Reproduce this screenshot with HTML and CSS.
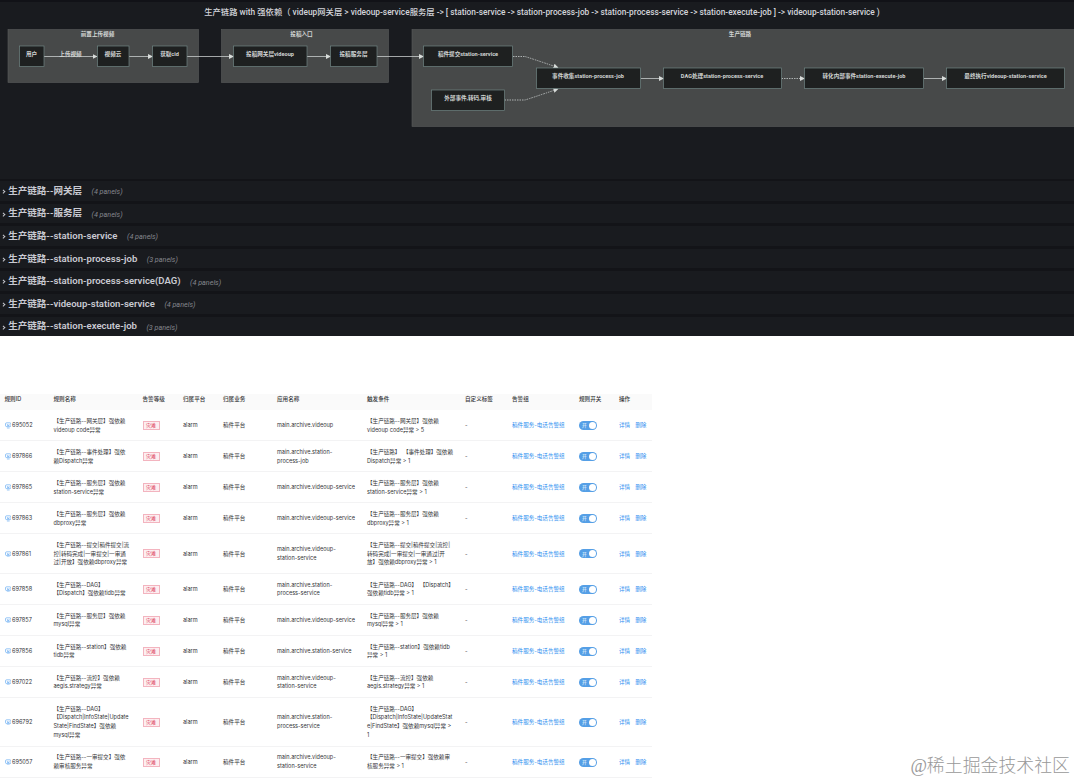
FILE: index.html
```html
<!DOCTYPE html>
<html lang="zh-CN">
<head>
  <meta charset="UTF-8" />
  <meta name="viewport" content="width=device-width, initial-scale=1.0" />
  <title>生产链路</title>
  <link rel="stylesheet" href="styles.css">
</head>
<body>
  <section class="dashboard">
    <div class="panel">
      <h1 class="panel-title">生产链路 with 强依赖（ videup网关层 &gt; videoup-service服务层 -&gt; [ station-service -&gt; station-process-job -&gt; station-process-service -&gt; station-execute-job ] -&gt; videoup-station-service )</h1>
      <svg class="diagram" width="1074" height="106" viewBox="0 24 1074 106">
        <defs>
          <marker id="arrow" viewBox="0 0 10 10" refX="9" refY="5" markerWidth="5" markerHeight="5" markerUnits="userSpaceOnUse" orient="auto">
            <path d="M0 0 L10 5 L0 10 z" fill="#d8dcda" />
          </marker>
        </defs>

        <g class="cluster">
          <rect x="8" y="29.5" width="190.5" height="53" />
          <rect x="221.5" y="29.5" width="167" height="53" />
          <rect x="412" y="29.5" width="664" height="97" />
          <text x="97.5" y="35.7">前置上传视频</text>
          <text x="301.5" y="35.7">投稿入口</text>
          <text x="740" y="35.7">生产链路</text>
        </g>

        <g class="edge">
          <path d="M44 56.5 H97" />
          <path d="M129 56.5 H152.5" />
          <path d="M187 56.5 H233.5" />
          <path d="M307 56.5 H330.5" />
          <path d="M377 56.5 H423.5" />
          <path d="M640.5 78.5 H663.5" />
          <path d="M924 78.5 H946.5" />
          <path class="dotted" d="M513 56.5 H525 Q530 58 558 67.5" />
          <path class="dotted" d="M504.5 100 H525 Q530 98.5 558 89" />
          <path class="dotted" d="M781.5 78.5 H804.5" />
        </g>
        <text class="edge-label" x="70.5" y="55.7">上传视频</text>

        <g class="node">
          <rect x="19.5" y="46" width="24.5" height="20.5" />
          <rect x="97.5" y="46" width="31.5" height="20.5" />
          <rect x="152.5" y="46" width="34.5" height="20.5" />
          <rect x="233.5" y="46" width="73.5" height="20.5" />
          <rect x="330.5" y="46" width="46.5" height="20.5" />
          <rect x="423.5" y="46" width="89" height="20.5" />
          <rect x="431.5" y="90" width="73" height="20.5" />
          <rect x="536.5" y="68" width="104" height="20.5" />
          <rect x="663.5" y="68" width="118" height="20.5" />
          <rect x="804.5" y="68" width="119" height="20.5" />
          <rect x="946.5" y="68" width="118" height="20.5" />
          <text x="31.5" y="56">用户</text>
          <text x="113" y="56">视频云</text>
          <text x="169.5" y="56">获取cid</text>
          <text x="270" y="56">投稿网关层videoup</text>
          <text x="353.5" y="56">投稿服务层</text>
          <text x="468" y="56">稿件提交station-service</text>
          <text x="468" y="100">外部事件,转码,审核</text>
          <text x="588" y="78">事件收集station-process-job</text>
          <text x="722" y="78">DAG处理station-process-service</text>
          <text x="864" y="78">转化内部事件station-execute-job</text>
          <text x="1005.5" y="78">最终执行videoup-station-service</text>
        </g>
      </svg>
    </div>

    <ul class="rows">
      <li><i class="chevron"></i><b>生产链路--网关层</b><em>(4 panels)</em></li>
      <li><i class="chevron"></i><b>生产链路--服务层</b><em>(4 panels)</em></li>
      <li><i class="chevron"></i><b>生产链路--station-service</b><em>(4 panels)</em></li>
      <li><i class="chevron"></i><b>生产链路--station-process-job</b><em>(3 panels)</em></li>
      <li><i class="chevron"></i><b>生产链路--station-process-service(DAG)</b><em>(4 panels)</em></li>
      <li><i class="chevron"></i><b>生产链路--videoup-station-service</b><em>(4 panels)</em></li>
      <li><i class="chevron"></i><b>生产链路--station-execute-job</b><em>(3 panels)</em></li>
    </ul>
  </section>

  <table class="rules">
    <colgroup>
      <col class="c-id"><col class="c-name"><col class="c-level"><col class="c-platform"><col class="c-biz"><col class="c-app">
      <col class="c-cond"><col class="c-tag"><col class="c-group"><col class="c-switch"><col class="c-action">
    </colgroup>
    <thead>
      <tr>
        <th>规则ID</th><th>规则名称</th><th>告警等级</th><th>归属平台</th><th>归属业务</th><th>应用名称</th>
        <th>触发条件</th><th>自定义标签</th><th>告警组</th><th>规则开关</th><th>操作</th>
      </tr>
    </thead>
    <tbody id="rules-body"></tbody>
  </table>

  <div class="watermark">@稀土掘金技术社区</div>

  <script>
    const rules = [
      { id: "695052", name: "【生产链路--网关层】强依赖<br>videoup code异常", app: "main.archive.videoup", cond: "【生产链路--网关层】强依赖<br>videoup code异常 &gt; 5" },
      { id: "697866", name: "【生产链路--事件处理】强依<br>赖Dispatch异常", app: "main.archive.station-<br>process-job", cond: "【生产链路】<span class=\"gap\"></span>【事件处理】强依赖<br>Dispatch异常 &gt; 1" },
      { id: "697865", name: "【生产链路--服务层】强依赖<br>station-service异常", app: "main.archive.videoup-service", cond: "【生产链路--服务层】强依赖<br>station-service异常 &gt; 1" },
      { id: "697863", name: "【生产链路--服务层】强依赖<br>dbproxy异常", app: "main.archive.videoup-service", cond: "【生产链路--服务层】强依赖<br>dbproxy异常 &gt; 1" },
      { id: "697861", name: "【生产链路--提交|稿件提交|流<br>控|转码完成|一审提交|一审通<br>过|开放】强依赖dbproxy异常", app: "main.archive.videoup-<br>station-service", cond: "【生产链路--提交|稿件提交|流控|<br>转码完成|一审提交|一审通过|开<br>放】强依赖dbproxy异常 &gt; 1" },
      { id: "697858", name: "【生产链路--DAG】<br>【Dispatch】强依赖tidb异常", app: "main.archive.station-<br>process-service", cond: "【生产链路--DAG】<span class=\"gap\"></span>【Dispatch】<br>强依赖tidb异常 &gt; 1" },
      { id: "697857", name: "【生产链路--服务层】强依赖<br>mysql异常", app: "main.archive.videoup-service", cond: "【生产链路--服务层】强依赖<br>mysql异常 &gt; 1" },
      { id: "697856", name: "【生产链路--station】强依赖<br>tidb异常", app: "main.archive.station-service", cond: "【生产链路--station】强依赖tidb<br>异常 &gt; 1" },
      { id: "697022", name: "【生产链路--流控】强依赖<br>aegis.strategy异常", app: "main.archive.videoup-<br>station-service", cond: "【生产链路--流控】强依赖<br>aegis.strategy异常 &gt; 1" },
      { id: "696792", name: "【生产链路--DAG】<br>【Dispatch|InfoState|Update<br>State|FindState】强依赖<br>mysql异常", app: "main.archive.station-<br>process-service", cond: "【生产链路--DAG】<br>【Dispatch|InfoState|UpdateStat<br>e|FindState】强依赖mysql异常 &gt;<br>1" },
      { id: "695057", name: "【生产链路--一审提交】强依<br>赖审核服务异常", app: "main.archive.videoup-<br>station-service", cond: "【生产链路--一审提交】强依赖审<br>核服务异常 &gt; 1" }
    ];

    const icon = `<svg class="icon" viewBox="0 0 12 12"><rect x="1" y="1.5" width="10" height="7" rx="2" /><path d="M3.5 11h5M4.5 4v2.500h3V4" /></svg>`;

    document.getElementById("rules-body").innerHTML = rules.map(r => `
      <tr>
        <td>${icon}${r.id}</td>
        <td>${r.name}</td>
        <td><span class="level">灾难</span></td>
        <td>alarm</td>
        <td>稿件平台</td>
        <td>${r.app}</td>
        <td>${r.cond}</td>
        <td>-</td>
        <td><a>稿件服务-电话告警组</a></td>
        <td><span class="switch">开</span></td>
        <td><a>详情</a><a>删除</a></td>
      </tr>`).join("");
  </script>
</body>
</html>
```
FILE: styles.css
```css
* {
  box-sizing: border-box;
  margin: 0;
  padding: 0;
}

body {
  width: 1076px;
  height: 782px;
  overflow: hidden;
  background: #fff;
  font-family: Inter, "Noto Sans CJK SC", sans-serif;
}

.dashboard {
  width: 1074px;
  height: 336px;
  background: #131418;
  font-family: Roboto, "Noto Sans CJK SC", sans-serif;
  overflow: hidden;
}

.panel {
  height: 179px;
  border-top: 2px solid #111217;
  background: #191b1f;
}

.panel-title {
  height: 22px;
  line-height: 20px;
  padding-left: 10px;
  text-align: center;
  font-size: 8.32px;
  font-weight: 500;
  color: #d3d4da;
  white-space: nowrap;
}

.diagram {
  display: block;
  font-size: 5.6px;
  font-weight: 700;
  text-anchor: middle;
}

.cluster rect {
  fill: #474949;
  stroke: #5a5d5c;
  stroke-width: 0.6;
}

.diagram text {
  fill: #d2d5d4;
}

.node rect {
  fill: #1e2020;
  stroke: #6f8583;
  stroke-width: 0.7;
}

.edge path {
  fill: none;
  stroke: #c8cccb;
  stroke-width: 0.8;
  marker-end: url(#arrow);
}

.edge .dotted {
  stroke-dasharray: 1.5 1;
}

.rows {
  list-style: none;
}

.rows li {
  display: flex;
  align-items: center;
  height: 22.6px;
  border: solid #131418;
  border-width: 2px 0 1px;
  background: #191b1f;
  padding-left: 2px;
}

.chevron {
  width: 2.6px;
  height: 2.6px;
  border: solid #c8c9d0;
  border-width: 0.8px 0.8px 0 0;
  transform: rotate(45deg);
  margin: 1px 3.6px 0 0;
}

.rows b {
  font-size: 9.55px;
  font-weight: 600;
  line-height: 14px;
  color: #c9cad2;
}

.rows em {
  margin: 2px 0 0 9.5px;
  font-size: 7.2px;
  color: #85878e;
}

.rules {
  width: 652px;
  margin-top: 58px;
  table-layout: fixed;
  border-collapse: separate;
  border-spacing: 0;
  font-size: 5.57px;
  line-height: 8.9px;
  color: #333437;
}

.c-id { width: 49px; }
.c-name { width: 89px; }
.c-level { width: 40.5px; }
.c-platform { width: 40px; }
.c-biz { width: 54px; }
.c-app { width: 90px; }
.c-cond { width: 98px; }
.c-tag { width: 47px; }
.c-group { width: 67px; }
.c-switch { width: 40px; }
.c-action { width: 37.5px; }

.rules th {
  height: 16px;
  padding: 0.5px 0 6px 4.5px;
  background: #fafafa;
  text-align: left;
  font-weight: 500;
  white-space: nowrap;
}

.rules td {
  padding: 6.6px 0 5.6px 4.5px;
  border-bottom: 1px solid #f3f3f4;
  vertical-align: middle;
  white-space: nowrap;
}

.gap {
  display: inline-block;
  width: 2.5px;
}

.icon {
  width: 6.5px;
  height: 6.5px;
  margin-right: 1px;
  vertical-align: -1.5px;
  fill: none;
  stroke: #4a9cf0;
  stroke-width: 1.1;
}

.level {
  display: inline-block;
  height: 9px;
  padding: 0 2.5px;
  border: 1px solid #f3b4bf;
  background: #fdeef0;
  color: #d8304f;
  font-size: 5px;
  line-height: 7px;
  vertical-align: middle;
}

.rules a {
  color: #2f8ff0;
  margin-right: 5px;
}

.switch {
  display: flex;
  align-items: center;
  justify-content: space-between;
  width: 18px;
  height: 9px;
  padding: 0 1px 0 3px;
  border-radius: 5px;
  background: #559fe6;
  color: #fff;
  font-size: 4.8px;
}

.switch::after {
  content: "";
  width: 7px;
  height: 7px;
  border-radius: 50%;
  background: #fff;
}

.watermark {
  position: absolute;
  right: 6px;
  bottom: 3px;
  font-family: "Liberation Serif", "Noto Sans CJK SC", serif;
  font-size: 17.9px;
  font-weight: 300;
  line-height: 26px;
  color: #999;
}
```
